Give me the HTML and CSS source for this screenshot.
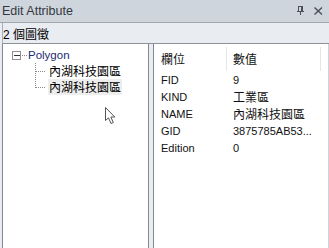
FILE: index.html
```html
<!DOCTYPE html>
<html lang="zh-Hant">
<head>
    <meta charset="UTF-8">
    <title>Edit Attribute</title>
    <link rel="stylesheet" href="styles.css">
</head>
<body>
    <div class="window">
        <header class="titlebar">
            <span class="title">Edit Attribute</span>
            <span class="btns">
                <svg width="8" height="9" viewBox="0 0 8 9" shape-rendering="crispEdges">
                    <rect x="1.5" y="0.5" width="4" height="5" fill="none" stroke="#4b5058"/>
                    <line x1="4.5" y1="1" x2="4.5" y2="5" stroke="#4b5058"/>
                    <line x1="0" y1="5.5" x2="7" y2="5.5" stroke="#4b5058"/>
                    <line x1="3.5" y1="6" x2="3.5" y2="9" stroke="#4b5058"/>
                </svg>
                <svg width="9" height="8" viewBox="0 0 9 8">
                    <path d="M0.5 0.5 L8 7.5 M8 0.5 L0.5 7.5" stroke="#4b5058" stroke-width="1.4" fill="none"/>
                </svg>
            </span>
        </header>

        <div class="body">
            <div class="count">2 個圖徵</div>

            <div class="panes">
                <div class="tree">
                    <div class="node">
                        <svg width="24" height="16" viewBox="0 0 24 16" shape-rendering="crispEdges">
                            <rect x="9.5" y="4.5" width="8" height="8" fill="#fff" stroke="#8f8f8f"/>
                            <line x1="11" y1="8.5" x2="17" y2="8.5" stroke="#333"/>
                            <line x1="19" y1="8.5" x2="24" y2="8.5" stroke="#8a8a8a" stroke-dasharray="1 1"/>
                        </svg>
                        <span class="root">Polygon</span>
                    </div>
                    <div class="node">
                        <svg width="44" height="16" viewBox="0 0 44 16" shape-rendering="crispEdges">
                            <line x1="32.5" y1="0" x2="32.5" y2="16" stroke="#8a8a8a" stroke-dasharray="1 1"/>
                            <line x1="33" y1="8.5" x2="43" y2="8.5" stroke="#8a8a8a" stroke-dasharray="1 1"/>
                        </svg>
                        <span class="leaf">內湖科技園區</span>
                    </div>
                    <div class="node">
                        <svg width="44" height="16" viewBox="0 0 44 16" shape-rendering="crispEdges">
                            <line x1="32.5" y1="0" x2="32.5" y2="9" stroke="#8a8a8a" stroke-dasharray="1 1"/>
                            <line x1="33" y1="8.5" x2="43" y2="8.5" stroke="#8a8a8a" stroke-dasharray="1 1"/>
                        </svg>
                        <span class="leaf hot">內湖科技園區</span>
                    </div>
                </div>

                <div class="splitter"></div>

                <div class="grid">
                    <div class="row head">
                        <div class="cell c1 zh">欄位</div>
                        <div class="cell c2 zh">數值</div>
                        <div class="cell c3"></div>
                    </div>
                    <div class="row">
                        <div class="cell c1">FID</div>
                        <div class="cell c2">9</div>
                    </div>
                    <div class="row">
                        <div class="cell c1">KIND</div>
                        <div class="cell c2 zh">工業區</div>
                    </div>
                    <div class="row">
                        <div class="cell c1">NAME</div>
                        <div class="cell c2 zh">內湖科技園區</div>
                    </div>
                    <div class="row">
                        <div class="cell c1">GID</div>
                        <div class="cell c2">3875785AB53...</div>
                    </div>
                    <div class="row">
                        <div class="cell c1">Edition</div>
                        <div class="cell c2">0</div>
                    </div>
                </div>
            </div>
        </div>

        <svg class="cursor" width="12" height="18" viewBox="0 0 12 18">
            <path d="M0.5 0.5 L0.5 13.5 L3.5 10.8 L6 16.5 L8.3 15.5 L5.9 10 L9.8 10 Z" fill="#fff" stroke="#555" stroke-width="1" stroke-linejoin="round"/>
        </svg>
    </div>
</body>
</html>
```

FILE: styles.css
```css
body{
    margin: 0;
    font-family: "Liberation Sans", Arial, "Noto Sans CJK TC", sans-serif;
    font-size: 11px;
    color: #111;
}

.window{
    width: 329px;
    height: 248px;
    position: relative;
    overflow: hidden;
    background-color: #e9ecf1;
    display: flex;
    flex-direction: column;
}

.titlebar{
    height: 22px;
    background-color: #ced5dd;
    border-bottom: 1px solid #9fa6ae;
    display: flex;
    align-items: center;
    justify-content: space-between;
    padding: 0 6px 0 2px;
}

.title{
    font-size: 12.5px;
    color: #34383e;
    margin-top: -1px;
}

.btns{
    display: flex;
    align-items: center;
    gap: 9px;
    margin-top: -1px;
}

.body{
    flex: 1;
    display: flex;
    flex-direction: column;
    padding-left: 2px;
    min-height: 0;
}

.count{
    height: 20px;
    border-left: 1px solid #a7aeb6;
    border-bottom: 1px solid #8b929a;
    display: flex;
    align-items: center;
    font-family: "Liberation Sans", "Noto Sans CJK TC", sans-serif;
    font-size: 12px;
    color: #000;
}

.panes{
    flex: 1;
    display: flex;
    min-height: 0;
}

.tree{
    width: 145px;
    background-color: #fff;
    border-left: 1px solid #828790;
    border-right: 1px solid #828790;
    padding-top: 3px;
}

.node{
    height: 16px;
    display: flex;
    align-items: center;
}

.node svg{
    flex: none;
}

.root{
    margin-left: 1px;
    color: #1d2a72;
    font-size: 11.5px;
}

.leaf{
    margin-left: 1px;
    padding: 0 1px;
    height: 16px;
    line-height: 16px;
    font-family: "Noto Sans CJK TC", sans-serif;
    font-size: 12px;
    color: #000;
}

.hot{
    background-color: #eeeeee;
}

.splitter{
    width: 4px;
    background-color: #e8edf4;
}

.grid{
    width: 174px;
    background-color: #fff;
    border-left: 1px solid #828790;
    border-right: 1px solid #cfd3d9;
}

.row{
    height: 17px;
    display: flex;
    align-items: center;
}

.row.head{
    height: 27px;
    align-items: flex-end;
}

.cell{
    padding-left: 7px;
    white-space: nowrap;
    overflow: hidden;
}

.c1{
    width: 66px;
}

.c2{
    width: 87px;
}

.c3{
    width: 7px;
    padding: 0;
}

.head .cell{
    height: 24px;
    line-height: 23px;
    border-right: 1px solid #e2e5e9;
}

.head .c1{
    width: 65px;
}

.head .c2{
    padding-left: 6px;
}

.head .c3{
    border-right: none;
}

.row .c2{
    padding-left: 6px;
}

.zh{
    font-family: "Noto Sans CJK TC", sans-serif;
    font-size: 12px;
}

.cursor{
    position: absolute;
    left: 105px;
    top: 107px;
}
```
